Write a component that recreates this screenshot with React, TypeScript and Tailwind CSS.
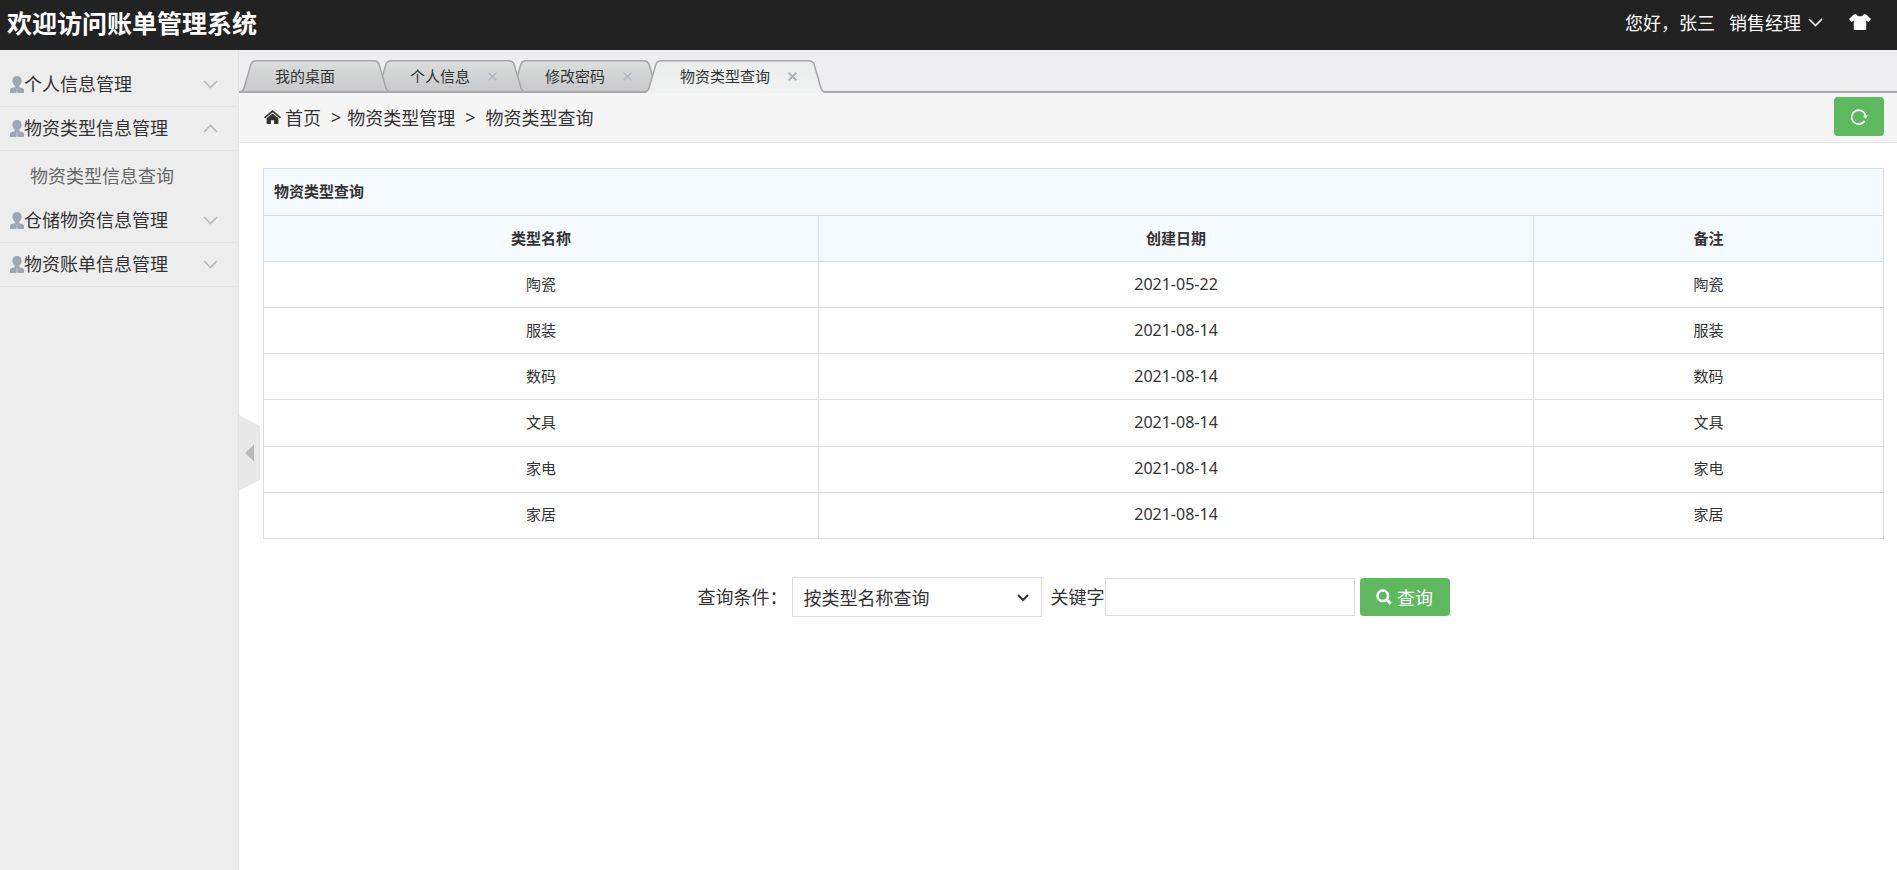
import { useState } from 'react';

type MenuItem = { name: string; children?: string[] };

const menus: MenuItem[] = [
  { name: '个人信息管理' },
  { name: '物资类型信息管理', children: ['物资类型信息查询'] },
  { name: '仓储物资信息管理' },
  { name: '物资账单信息管理' }
];

const tabs = [
  { name: '我的桌面', closable: false, width: 150 },
  { name: '个人信息', closable: true, width: 150 },
  { name: '修改密码', closable: true, width: 150 },
  { name: '物资类型查询', closable: true, width: 180 }
];

const types = [
  { name: '陶瓷', date: '2021-05-22', remark: '陶瓷' },
  { name: '服装', date: '2021-08-14', remark: '服装' },
  { name: '数码', date: '2021-08-14', remark: '数码' },
  { name: '文具', date: '2021-08-14', remark: '文具' },
  { name: '家电', date: '2021-08-14', remark: '家电' },
  { name: '家居', date: '2021-08-14', remark: '家居' }
];

const UserIcon = () => (
  <svg className="h-[17px] w-[14px] shrink-0" viewBox="0 0 14 17" fill="#a0a6b1">
    <path d="M7 0C4.200 0 2.400 1.900 2.400 4.600c0 2.300 1 4.100 2.300 5.100v1.500L1.300 12.200C.4 12.500 0 13 0 14v2.200c0 .5.300.8.800.8h12.400c.5 0 .8-.3.800-.8V14c0-1-.4-1.500-1.300-1.800l-3.400-1V9.700c1.300-1 2.300-2.800 2.300-5.100C11.600 1.900 9.800 0 7 0z" />
    <path d="M6.300 12.500h1.400v1.200H6.300zM6.500 14.500h1l.3 2.500H6.200z" fill="#c9cdd4" />
  </svg>
);

const Chevron = ({ up = false, color = '#b4b8c0' }: { up?: boolean; color?: string }) => (
  <svg className="h-[9px] w-[15px] shrink-0" viewBox="0 0 15 9" fill="none" stroke={color} strokeWidth="1.600">
    <path d={up ? 'M1 8l6.500-6.500L14 8' : 'M1 1l6.500 6.500L14 1'} />
  </svg>
);

const HomeIcon = () => (
  <svg className="h-[14px] w-[17px] shrink-0" viewBox="0 0 17 14" fill="#333">
    <path d="M8.500 0L0 7.200l1.100 1.200L8.500 2.200l7.400 6.200L17 7.200z" />
    <path d="M8.500 3.400L2.600 8.300v4.900c0 .5.200.8.700.8h3.600v-3.700h3.200V14h3.600c.5 0 .7-.3.700-.8V8.300z" />
  </svg>
);

const ShirtIcon = () => (
  <svg className="h-[16px] w-[22px]" viewBox="0 0 22 16" fill="#fff">
    <path d="M7 0L4.500.8 0 5l2.600 3 2.200-1.500V15c0 .6.300 1 .8 1h10.800c.5 0 .8-.4.800-1V6.500L19.400 8 22 5 17.500.8 15 0c-.6 1.500-2 2.300-4 2.300S7.600 1.500 7 0z" />
  </svg>
);

const RefreshIcon = () => (
  <svg className="h-[16px] w-[17px]" viewBox="0 0 17 16" fill="none" stroke="#fff" strokeWidth="1.700">
    <path d="M13.700 11.700A7 7 0 1 1 14.500 6.500" />
    <path d="M11.800 7l5.200-.8-2.200 3.600z" fill="#fff" stroke="none" />
  </svg>
);

const SearchIcon = () => (
  <svg className="h-[16px] w-[16px]" viewBox="0 0 16 16" fill="none" stroke="#fff" strokeWidth="2.600">
    <circle cx="6.800" cy="6.800" r="5.300" />
    <path d="M10.700 10.700l4 4" strokeWidth="3" />
  </svg>
);

const Tab = ({ name, closable, width: w, active, order, onSelect }: {
  name: string;
  closable: boolean;
  width: number;
  active: boolean;
  order: number;
  onSelect: () => void;
}) => {
  const outline = `M0 32Q3 31.500 4 28L11 4Q12.500 .750 16 .750H${w - 16}Q${w - 12.5} .750 ${w - 11} 4L${w - 4} 28Q${w - 3} 31.500 ${w} 32`;

  return (
    <li className="relative -mr-[15px] h-[33px]" style={{ width: w, zIndex: order }}>
      <svg className="absolute inset-0 h-[33px] w-full" viewBox={`0 0 ${w} 33`} fill="none">
        <defs>
          <linearGradient id="tab" x1="0" y1="0" x2="0" y2="1">
            <stop offset="0" stopColor="#dcdfde" />
            <stop offset="1" stopColor="#c8c8ca" />
          </linearGradient>
          <linearGradient id="tab-active" x1="0" y1="0" x2="0" y2="1">
            <stop offset="0" stopColor="#ebeeec" />
            <stop offset="1" stopColor="#f1f1f2" />
          </linearGradient>
        </defs>
        <path
          d={active ? `${outline}L${w - 2} 33H2z` : outline}
          fill={active ? 'url(#tab-active)' : 'url(#tab)'}
        />
        <path d={outline} stroke="#a6a6a6" strokeWidth="1.500" />
        {!active && <path d={`M0 32H${w}`} stroke="#a9a9a9" strokeWidth="2" />}
      </svg>
      <div className="relative flex h-8 items-center pl-[35px] text-[15px]">
        <button type="button" className="whitespace-nowrap" onClick={onSelect}>{name}</button>
        {closable && (
          <button type="button" aria-label="关闭" className="ml-[18px]">
            <svg className="h-[9px] w-[9px]" viewBox="0 0 9 9" stroke="#b1b6bd" strokeWidth={active ? 2 : 1.5}>
              <path d="M.700.700l7.600 7.600M8.300.700L.700 8.300" />
            </svg>
          </button>
        )}
      </div>
    </li>
  );
};

const Sidebar = () => {
  const [open, setOpen] = useState('物资类型信息管理');

  return (
    <aside className="w-[239px] shrink-0 border-r border-[#e3e3e3] bg-[#ededed] pt-[13px]">
      {menus.map((menu) => (
        <div key={menu.name}>
          <button
            type="button"
            className="flex h-11 w-full items-center border-b border-[#e3e3e3] pr-5 pl-[10px]"
            onClick={() => setOpen(menu.name)}
          >
            <UserIcon />
            <span className="mr-auto pb-[3px]">{menu.name}</span>
            <Chevron up={open === menu.name} />
          </button>
          {open === menu.name && menu.children?.map((child) => (
            <a key={child} href="#" className="flex h-12 items-center pb-px pl-[30px] text-[#666]">
              {child}
            </a>
          ))}
        </div>
      ))}
    </aside>
  );
};

const TypesTable = () => (
  <table className="h-[371px] w-full table-fixed border-collapse text-center text-[15px]">
    <colgroup>
      <col className="w-[34.260%]" />
      <col className="w-[44.140%]" />
      <col />
    </colgroup>
    <thead className="bg-[#f5fafe]">
      <tr className="h-[47px]">
        <th colSpan={3} className="border border-[#ddd] px-[10px] pb-0.5 text-left">物资类型查询</th>
      </tr>
      <tr className="h-[46px]">
        <th className="border border-[#ddd] pb-0.5">类型名称</th>
        <th className="border border-[#ddd] pb-0.5">创建日期</th>
        <th className="border border-[#ddd] pb-0.5">备注</th>
      </tr>
    </thead>
    <tbody>
      {types.map((type) => (
        <tr key={type.name} className="h-[46px]">
          <td className="border border-[#ddd] pb-0.5">{type.name}</td>
          <td className="border border-[#ddd] pb-0.5 font-['Noto_Sans'] text-base">{type.date}</td>
          <td className="border border-[#ddd] pb-0.5">{type.remark}</td>
        </tr>
      ))}
    </tbody>
  </table>
);

const SearchForm = () => (
  <form className="mt-[38px] flex items-center justify-center" onSubmit={(e) => e.preventDefault()}>
    <label htmlFor="condition" className="pb-[3px]">查询条件：</label>
    <div className="relative ml-1">
      <select
        id="condition"
        className="h-10 w-[250px] appearance-none border border-[#ddd] bg-white pl-[11px]"
      >
        <option>按类型名称查询</option>
      </select>
      <svg
        className="pointer-events-none absolute top-[17px] right-[13px] h-[8px] w-[12px]"
        viewBox="0 0 12 8"
        fill="none"
        stroke="#333"
        strokeWidth="2"
      >
        <path d="M1 1l5 5 5-5" />
      </svg>
    </div>
    <label htmlFor="keyword" className="ml-[9px] pb-[3px]">关键字</label>
    <input id="keyword" type="text" className="h-[38px] w-[250px] border border-[#ddd] bg-white px-[10px]" />
    <button
      type="submit"
      className="ml-[5px] flex h-[38px] w-[90px] items-center justify-center gap-[5px] rounded-[4px] bg-[#5eb95e] text-white"
    >
      <SearchIcon />
      查询
    </button>
  </form>
);

const App = () => {
  const [activeTab, setActiveTab] = useState('物资类型查询');

  return (
    <div className="flex min-h-screen flex-col bg-white font-['Noto_Sans_CJK_SC',sans-serif] text-[18px] leading-6 text-[#333]">
      <header className="flex h-[50px] items-center bg-[#222] pr-[26px] pb-[6px] pl-[7px] text-white">
        <h1 className="mr-auto text-[25px] font-bold">欢迎访问账单管理系统</h1>
        <span>您好，张三</span>
        <button type="button" className="ml-[14px] flex items-center gap-[7px]">
          销售经理
          <Chevron color="#fff" />
        </button>
        <button type="button" aria-label="换肤" className="ml-[26px]">
          <ShirtIcon />
        </button>
      </header>

      <div className="flex grow">
        <Sidebar />

        <main className="relative min-w-0 grow">
          <div className="h-[43px] border-b-2 border-[#a9a9a9] bg-[#eeeef0] pt-[10px]">
            <ul className="isolate flex pl-px">
              {tabs.map((tab, i) => (
                <Tab
                  key={tab.name}
                  {...tab}
                  active={tab.name === activeTab}
                  order={tab.name === activeTab ? tabs.length + 1 : tabs.length - i}
                  onSelect={() => setActiveTab(tab.name)}
                />
              ))}
            </ul>
          </div>

          <nav className="flex h-[50px] items-center border-b border-[#e5e5e5] bg-[#f5f5f5] pr-[13px] pb-0.5 pl-[25px]">
            <HomeIcon />
            <a href="#" className="ml-1">首页</a>
            <span className="mr-[6px] ml-[10px] font-['Noto_Sans']">&gt;</span>
            <span>物资类型管理</span>
            <span className="mr-[10px] ml-[10px] font-['Noto_Sans']">&gt;</span>
            <span>物资类型查询</span>
            <button
              type="button"
              aria-label="刷新"
              className="ml-auto flex h-[39px] w-[50px] items-center justify-center rounded-[4px] bg-[#5eb95e]"
            >
              <RefreshIcon />
            </button>
          </nav>

          <section className="pt-[25px] pr-[13px] pl-6">
            <TypesTable />
            <SearchForm />
          </section>

          <button type="button" aria-label="收起菜单" className="absolute top-[365px] left-0">
            <svg className="h-[76px] w-[21px]" viewBox="0 0 21 76">
              <path d="M0 0l21 11v54L0 76z" fill="#e8e8e8" />
              <path d="M6 38l9-8.500v17z" fill="#b9b9b9" />
            </svg>
          </button>
        </main>
      </div>
    </div>
  );
};

export default App;
